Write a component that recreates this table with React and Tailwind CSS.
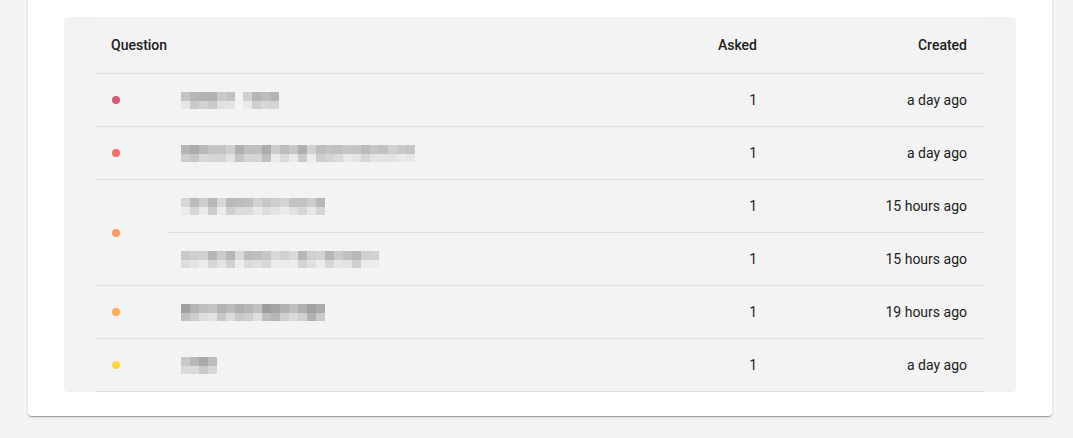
import React from "react";

/* ===================== DATA ===================== */
const groups = [
  { color: "#d9587c", items: [{ segments: [6, 4], seed: 11, created: "a day ago" }] },
  { color: "#f76b6b", items: [{ segments: [26], seed: 27, created: "a day ago" }] },
  {
    color: "#fd9a63",
    items: [
      { segments: [16], seed: 41, created: "15 hours ago", faint: true },
      { segments: [22], seed: 58, created: "15 hours ago", faint: true },
    ],
  },
  { color: "#fdad4f", items: [{ segments: [16], seed: 73, created: "19 hours ago", dark: true }] },
  { color: "#fdd73e", items: [{ segments: [4], seed: 89, created: "a day ago" }] },
];

/* ===================== PIXELATED TEXT ===================== */
const PixelText = ({ segments, seed, faint, dark }) => {
  let s = seed;
  const rnd = () => {
    s = (s * 9301 + 49297) % 233280;
    return s / 233280;
  };
  const base = dark ? 155 : faint ? 180 : 170;

  return (
    <div className="flex gap-[8px]">
      {segments.map((n, i) => (
        <div key={i} className="flex">
          {Array.from({ length: n }).map((_, j) => {
            const top = Math.round(base + rnd() * 40);
            const bottom = Math.min(236, Math.round(top + 16 + rnd() * 20));
            return (
              <div key={j} className="flex w-[9px] flex-col">
                <div className="h-[9px]" style={{ background: `rgb(${top},${top},${top})` }} />
                <div className="h-[8px]" style={{ background: `rgb(${bottom},${bottom},${bottom})` }} />
              </div>
            );
          })}
        </div>
      ))}
    </div>
  );
};

/* ===================== APP ===================== */
export default function App() {
  return (
    <div className="h-[438px] overflow-hidden bg-[#f3f3f3] font-['Roboto',sans-serif] text-[14px] text-[#212121]">
      <div className="ml-[28px] mr-[21px] rounded-b-[4px] bg-white px-[36px] pb-[24px] pt-[17px] shadow-[0_2px_1px_-1px_rgba(0,0,0,0.2),0_1px_1px_0_rgba(0,0,0,0.14),0_1px_3px_0_rgba(0,0,0,0.12)]">
        <div className="rounded-[4px] bg-[#f2f2f2] px-[32px]">
          <table className="w-full border-collapse bg-[#f3f3f3]">
            <thead>
              <tr className="h-[56px] border-b border-[#e0e0e0]">
                <th colSpan={2} className="pl-[15px] pt-[2px] text-left font-medium">Question</th>
                <th className="w-[150px] pr-[16px] pt-[2px] text-right font-medium">Asked</th>
                <th className="w-[211px] pr-[17px] pt-[2px] text-right font-medium">Created</th>
              </tr>
            </thead>
            <tbody>
              {groups.map((g, gi) =>
                g.items.map((item, ii) => (
                  <tr key={`${gi}-${ii}`} className="h-[53px]">
                    {ii === 0 && (
                      <td
                        rowSpan={g.items.length}
                        className="w-[71px] border-b border-[#e0e0e0] pl-[16px] pt-[1px]"
                      >
                        <div className="h-[8px] w-[8px] rounded-full" style={{ background: g.color }} />
                      </td>
                    )}
                    <td className="border-b border-[#e0e0e0] pl-[14px] pt-[1px]">
                      <PixelText {...item} />
                    </td>
                    <td className="border-b border-[#e0e0e0] pr-[16px] pt-[2px] text-right">1</td>
                    <td className="border-b border-[#e0e0e0] pr-[17px] pt-[2px] text-right">{item.created}</td>
                  </tr>
                ))
              )}
            </tbody>
          </table>
        </div>
      </div>
    </div>
  );
}
